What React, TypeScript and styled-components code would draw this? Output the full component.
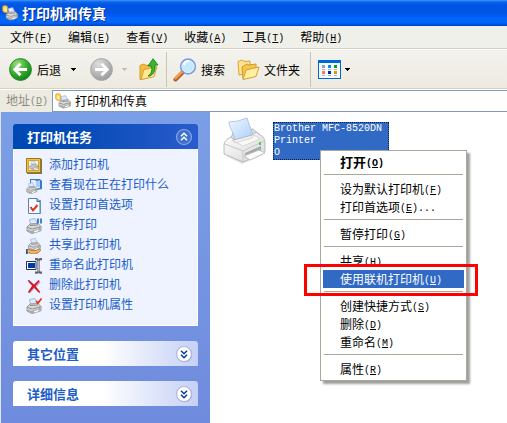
import React from "react";
import styled, { createGlobalStyle, css } from "styled-components";

const Global = createGlobalStyle`
  * { box-sizing: border-box; }
  html, body, #root { height: 100%; }
  body {
    margin: 0;
    overflow: hidden;
    background: #fff;
    color: #000;
    font: 12px/18px "Noto Sans CJK SC", sans-serif;
  }
  button, input { font: inherit; color: inherit; }
  button { border: 0; padding: 0; background: none; text-align: left; white-space: nowrap; }
  svg { display: block; flex: none; }
`;

const Window = styled.div`
  display: flex;
  flex-direction: column;
  min-height: 100%;
`;

const TitleBar = styled.header`
  display: flex;
  align-items: center;
  gap: 4px;
  height: 26px;
  padding-left: 2px;
  background: linear-gradient(#3d95ff 0, #0a62ee 2px, #0054e3 5px, #0055e5 13px, #0066ff 19px, #0062f8 23px, #0040c4 26px);
`;

const Title = styled.h1`
  margin: 0;
  color: #fff;
  font-size: 14px;
  line-height: 24px;
  font-weight: 700;
  text-shadow: 1px 1px 0 #0a2f8c;
`;

const MenuBar = styled.nav`
  display: flex;
  gap: 16px;
  height: 23px;
  padding: 0 10px;
  background: #f0f0eb;
  border-bottom: 1px solid #d8d2bd;
`;

const MenuButton = styled.button`
  line-height: 20px;
`;

const Mono = styled.span<{ $bold?: boolean }>`
  font-family: "Liberation Mono", monospace;
  font-size: 10px;
  line-height: 12px;
  vertical-align: 1px;
  font-weight: ${(p) => (p.$bold ? 700 : 400)};
  u { text-underline-offset: 1px; }
`;

const ToolBar = styled.div`
  display: flex;
  align-items: center;
  height: 40px;
  padding: 1px 0 0 9px;
  background: linear-gradient(#f3f2ee, #edebe0);
  border-top: 1px solid #fff;
  border-bottom: 1px solid #d8d2bd;
`;

const ToolButton = styled.button<{ $gap?: number; $after?: number }>`
  display: flex;
  align-items: center;
  flex: none;
  gap: ${(p) => p.$gap ?? 4}px;
  margin-right: ${(p) => p.$after ?? 0}px;
`;

const Divider = styled.span<{ $after: number }>`
  flex: none;
  width: 1px;
  height: 35px;
  margin-right: ${(p) => p.$after}px;
  background: #cbc6af;
`;

const AddressBar = styled.div`
  display: flex;
  height: 23px;
  border-top: 1px solid #fff;
  background: #edebe1;
`;

const AddressLabel = styled.label`
  width: 52px;
  padding-left: 6px;
  color: #8c8b82;
  line-height: 20px;
`;

const AddressBox = styled.div`
  display: flex;
  flex: 1;
  align-items: center;
  gap: 4px;
  min-width: 0;
  padding-left: 2px;
  border: solid #7f9db9;
  border-width: 1px 0 1px 1px;
  background: #fff;
`;

const AddressInput = styled.input`
  flex: 1;
  min-width: 0;
  height: 18px;
  padding: 0;
  border: 0;
  outline: 0;
  background: transparent;
`;

const Content = styled.div`
  display: flex;
  flex: 1;
`;

const Sidebar = styled.aside`
  display: flex;
  flex: none;
  flex-direction: column;
  gap: 15px;
  width: 210px;
  padding: 12px 12px 17px;
  border-left: 1px solid #dfe5f5;
  background: linear-gradient(#7b9fe6, #6f8bdd);
`;

const Panel = styled.section``;

const PanelHeader = styled.button<{ $open?: boolean }>`
  display: flex;
  align-items: center;
  justify-content: space-between;
  width: 100%;
  height: 25px;
  padding: 0 5px 0 14px;
  border-radius: 3px 3px 0 0;
  font-size: 13px;
  font-weight: 700;
  ${(p) =>
    p.$open
      ? css`
          color: #fff;
          background: linear-gradient(90deg, #0049b4 25%, #2a5bcc);
        `
      : css`
          color: #215dc6;
          background: linear-gradient(90deg, #fff 48%, #c5d1f5);
        `}
`;

const TaskList = styled.ul`
  margin: 0;
  padding: 6px 12px 10px;
  list-style: none;
  background: #eff3ff;
  border: 1px solid #fff;
  border-top: 0;
`;

const TaskLink = styled.a`
  display: flex;
  gap: 7px;
  height: 20px;
  color: #215dc6;
  text-decoration: none;
  svg { margin-top: 3px; }
`;

const Files = styled.main`
  position: relative;
  flex: 1;
  min-width: 0;
  padding: 4px 0 0 12px;
`;

const PrinterItem = styled.button`
  display: flex;
  gap: 6px;
`;

const PrinterName = styled.span`
  width: 116px;
  height: 38px;
  margin-top: 6px;
  border: 1px dotted #0a1c48;
  color: #fff;
  background: #316ac5;
  font-family: "Liberation Mono", monospace;
  font-size: 10px;
  line-height: 12px;
  white-space: normal;
`;

const PopupMenu = styled.div`
  position: absolute;
  top: 38px;
  left: 110px;
  width: 147px;
  padding: 2px;
  border: 1px solid #aca899;
  background: #fff;
  box-shadow: 3px 3px 2px #a0a0a0;
`;

const PopupItem = styled.button<{ $bold?: boolean; $active?: boolean }>`
  display: block;
  width: 100%;
  height: 18px;
  padding-left: 17px;
  line-height: 16px;
  ${(p) => p.$bold && css`font-size: 13px; font-weight: 700;`}
  ${(p) => p.$active && css`color: #fff; background: #316ac5;`}
`;

const PopupLine = styled.hr`
  height: 1px;
  margin: 3px 1px 5px;
  border: 0;
  background: #aca899;
`;

const Highlight = styled.div`
  position: absolute;
  top: 152px;
  left: 94px;
  width: 174px;
  height: 32px;
  border: 3px solid #f00;
  pointer-events: none;
`;

function Key({ k, bold, tail = "" }: { k: string; bold?: boolean; tail?: string }) {
  return <Mono $bold={bold}>(<u>{k}</u>){tail}</Mono>;
}

function PrinterShape() {
  return (
    <>
      <path d="M4.5 7 3.5 1.5 9 .5 12 6.5z" fill="#dbeaff" stroke="#8aa6cc" strokeWidth=".7" />
      <path d="M1 9 4 6l8-.5 3 3v4L6 15.5 1 13z" fill="#dadada" stroke="#808080" strokeWidth=".8" />
      <path d="m1.5 9.5 5 1.5 8-2.2M4 7.5l8-.5" fill="none" stroke="#777" strokeWidth=".8" />
      <path d="M2 11.5 6 13l8-2.5v1.8L6 15l-4-2z" fill="#a8a8a8" />
      <path d="m7 13.2 5-1.6 2.5 1L9 15z" fill="#fff" stroke="#888" strokeWidth=".5" />
      <path d="M13 10h1" stroke="#3cae35" />
    </>
  );
}

function PrintersFolderIcon({ size }: { size: number }) {
  return (
    <svg width={size} height={size} viewBox="0 0 16 16">
      <path d="M.7 2Q.7.7 2 .7h2.5l1 1.3v6L2 7.2.7 6z" fill="#ffd45c" stroke="#d69a22" strokeWidth=".7" />
      <path d="M2.5 3h1.8v3H2.5z" fill="#fff6bd" />
      <g transform="translate(3.2 2.2) scale(.84)"><PrinterShape /></g>
    </svg>
  );
}

type TaskKind = "add" | "queue" | "prefs" | "pause" | "share" | "rename" | "remove" | "props";

function TaskIcon({ kind }: { kind: TaskKind }) {
  return (
    <svg width="16" height="16" viewBox="0 0 16 16">
      {kind === "add" && (
        <>
          <path d="M1 1h15v15H1z" fill="#77735f" />
          <path d="M.5.5h14v14H.5z" fill="#edc54c" stroke="#a57813" />
          <path d="M2.5 2.5h10v10h-10z" fill="#fff9d8" stroke="#c9a23e" />
          <g transform="translate(3.2 2.8) scale(.58)"><PrinterShape /></g>
        </>
      )}
      {kind === "queue" && (
        <>
          <path d="M4 1h10l2 2v8l-5 1-7-3z" fill="#3979cf" />
          <path d="M5 2h4l1 1 4-.5V10l-5 1-4-2z" fill="#deedff" />
          <path d="M10 4h4M10 6h4M10 8h4" stroke="#82a9da" />
          <g transform="translate(0 4.5) scale(.72)"><PrinterShape /></g>
        </>
      )}
      {kind === "prefs" && (
        <>
          <path d="M3 2h12v14H3z" fill="#8e9bac" />
          <path d="M2.5.5H11l3 3v12H2.5z" fill="#f8fbff" stroke="#5882b5" />
          <path d="M11 .5v3h3" fill="#8db9e7" stroke="#3b6eaa" />
          <path d="m4.5 9 2.5 3.3L11.5 7" fill="none" stroke="#e03518" strokeWidth="2" />
        </>
      )}
      {(kind === "pause" || kind === "props") && <PrinterShape />}
      {kind === "pause" && <path d="M12 .5v5M15 .5v5" stroke="#286fc2" strokeWidth="1.7" />}
      {kind === "props" && <path d="m10 3 2 2.2L15.5.5" fill="none" stroke="#eb3216" strokeWidth="1.8" />}
      {kind === "share" && (
        <>
          <g transform="translate(1.7 0) scale(.84)"><PrinterShape /></g>
          <path d="M0 11.5h3l3 1h4l3-1.5 2 1-3 3-4 1-5-1H0z" fill="#f3b367" stroke="#aa681e" strokeWidth=".7" />
          <path d="M0 11h1.7v5H0z" fill="#3a568a" />
        </>
      )}
      {kind === "rename" && (
        <>
          <path d="M.5 3.5H10v8H.5z" fill="#fff" stroke="#25324b" />
          <path d="M2 5h7v5H2z" fill="#0038ad" />
          <path d="M9 1.2h2.2L12.5 2.5 14 1.2h2M9 14.7h2.2l1.3-1.2 1.5 1.2h2M12.5 2.5v11" fill="none" stroke="#5f6670" strokeWidth="2.2" />
          <path d="M12.5 2.5v11" stroke="#c6ccd5" strokeWidth=".8" />
        </>
      )}
      {kind === "remove" && (
        <>
          <path d="m3 4 11 11M14 4 3 15" stroke="#b7a9bb" strokeWidth="1.5" />
          <path d="m1.5 2.5 4.7 5L2 14l1 1 5-5.5 5 5.3 1-1L9.5 8l4.3-5-1.2-1L8 6.5 3 2z" fill="#d91525" />
        </>
      )}
    </svg>
  );
}

function RoundArrow({ back }: { back?: boolean }) {
  const id = back ? "navBack" : "navForward";
  return (
    <svg width="23" height="23" viewBox="0 0 23 23">
      <defs>
        <radialGradient id={id} cx=".35" cy=".25" r=".8">
          <stop stopColor={back ? "#9ce078" : "#dedede"} />
          <stop offset=".55" stopColor={back ? "#3dab31" : "#b9b9b9"} />
          <stop offset="1" stopColor={back ? "#118017" : "#989898"} />
        </radialGradient>
      </defs>
      <circle cx="11.5" cy="11.5" r="10.9" fill={`url(#${id})`} stroke={back ? "#248d27" : "#aaa"} />
      <path
        d={back ? "M18 11.5H6M11.5 5.7l-5.8 5.8 5.8 5.8" : "M5 11.5h12M11.5 5.7l5.8 5.8-5.8 5.8"}
        fill="none" stroke="#fff" strokeWidth="2.8"
      />
    </svg>
  );
}

function Caret({ dim }: { dim?: boolean }) {
  return (
    <svg width="5" height="3" viewBox="0 0 5 3" shapeRendering="crispEdges">
      <path d="M0 0h5v1H4v1H3v1H2V2H1V1H0z" fill={dim ? "#c2c0b6" : "#000"} />
    </svg>
  );
}

function UpIcon() {
  return (
    <svg width="20" height="23" viewBox="0 0 20 23">
      <path d="M1 7.5 5 6l2 1.5 5-1V19L2 21.5H1z" fill="#f2bd42" stroke="#d49b25" />
      <path d="m2 21.5 3-10 13-2.8-3 10z" fill="#ffe995" stroke="#d7a32e" />
      <path d="M9 18q5-3 3.5-10H9l5-7.3L19 7h-3q1 8-5 11z" fill="#37b72e" stroke="#167e1c" strokeWidth=".8" />
    </svg>
  );
}

function SearchIcon() {
  return (
    <svg width="24" height="24" viewBox="0 0 24 24">
      <path d="m9.5 14.5-7 7" stroke="#b65c20" strokeWidth="4" strokeLinecap="round" />
      <path d="m9 14-6.5 6.5" stroke="#f8a552" strokeWidth="2" strokeLinecap="round" />
      <circle cx="15" cy="8.5" r="7.3" fill="#c5e9ff" stroke="#809fdc" strokeWidth="1.8" />
      <circle cx="15" cy="8.5" r="6" fill="none" stroke="#e5f4ff" />
      <path d="M11 7q1-4 5-4" fill="none" stroke="#fff" strokeWidth="2" />
    </svg>
  );
}

function FoldersIcon() {
  return (
    <svg width="23" height="22" viewBox="0 0 23 22">
      <path d="M1 2.5 5 1l2 1.5 6-.5v12L2 16z" fill="#ffe491" stroke="#d9a338" />
      <path d="M5 8 10 5l2 1 7-1v12L6 20z" fill="#f3c64f" stroke="#d29a28" />
      <path d="M6 20.5 9 11l13-3-3 9.5z" fill="#ffef9f" stroke="#d7a130" />
    </svg>
  );
}

function ViewsIcon() {
  const colors = ["#9c99ca", "#078aee", "#09a414", "#ff7751", "#00319e", "#cca000"];
  return (
    <svg width="23" height="19" viewBox="0 0 23 19" shapeRendering="crispEdges">
      <path d="M.5.5h22v18H.5z" fill="#f8fbff" stroke="#0067d7" />
      <path d="M0 0h23v3H0z" fill="#0067d7" />
      {colors.map((c, i) => {
        const x = 4 + (i % 3) * 6;
        const y = 5 + Math.floor(i / 3) * 6;
        return (
          <g key={c}>
            <path d={`M${x} ${y}h3v3h-3z`} fill={c} />
            <path d={`M${x} ${y + 4}h3v1h-3z`} fill="#adb2b9" />
          </g>
        );
      })}
    </svg>
  );
}

function Chevron({ up }: { up?: boolean }) {
  return (
    <svg width="18" height="18" viewBox="0 0 18 18">
      {!up && <circle cx="9.7" cy="9.7" r="7.6" fill="#8c9bc8" opacity=".6" />}
      <circle cx="9" cy="9" r="7.5" fill={up ? "#3f70cf" : "#fff"} stroke={up ? "#84a5e5" : "#b0b8d5"} strokeWidth="1.2" />
      <path
        d={up ? "m6 8.3 3-3 3 3M6 12.3l3-3 3 3" : "m6 5.7 3 3 3-3M6 9.7l3 3 3-3"}
        fill="none" stroke={up ? "#fff" : "#073b9f"} strokeWidth="1.5"
      />
    </svg>
  );
}

function LargePrinter() {
  return (
    <svg width="45" height="49" viewBox="0 0 45 49">
      <defs>
        <linearGradient id="sheet" x2="1" y2="1">
          <stop stopColor="#f2f9ff" /><stop offset="1" stopColor="#a9cdfa" />
        </linearGradient>
        <linearGradient id="shell" x2="1" y2="1">
          <stop stopColor="#fff" /><stop offset="1" stopColor="#d6d6d6" />
        </linearGradient>
      </defs>
      <path d="m4 40 16 8 21-9v-3L18 42z" fill="#e2e2e2" />
      <path d="M9 22 11 17l20-4 8 7-19 8z" fill="#dedede" stroke="#b8b8b8" />
      <path d="M13 24C11 15 7 11 7 6q9 0 18-4 2 6 6 17z" fill="url(#sheet)" stroke="#9cbbe3" strokeWidth=".8" />
      <path d="M2 29q0-5 7-8l3 3 18-5 4-3 7 5q2 2 2 6v9L21 46 2 38z" fill="url(#shell)" stroke="#b4b4b4" strokeWidth=".9" />
      <path d="m3 28 18 7 21-10M21 35v10" fill="none" stroke="#c6c6c6" />
      <path d="m10 24 11 6 17-7-6-4-2 3-17 5z" fill="#f9f9f9" stroke="#cbcbcb" strokeWidth=".7" />
      <path d="m23 37 16-7v5l-16 7z" fill="#a4a8ac" />
      <path d="m22 40 15-6 6 3-15 7z" fill="#fbfbfb" stroke="#b8b8b8" strokeWidth=".8" />
      <path d="M38 26v3" stroke="#52cc42" strokeWidth="2" />
    </svg>
  );
}

const menus = [["文件", "F"], ["编辑", "E"], ["查看", "V"], ["收藏", "A"], ["工具", "T"], ["帮助", "H"]];

const tasks: [TaskKind, string][] = [
  ["add", "添加打印机"],
  ["queue", "查看现在正在打印什么"],
  ["prefs", "设置打印首选项"],
  ["pause", "暂停打印"],
  ["share", "共享此打印机"],
  ["rename", "重命名此打印机"],
  ["remove", "删除此打印机"],
  ["props", "设置打印机属性"],
];

type Command = { text: string; k: string; tail?: string; bold?: boolean; active?: boolean };

const commands: Command[][] = [
  [{ text: "打开", k: "O", bold: true }],
  [{ text: "设为默认打印机", k: "F" }, { text: "打印首选项", k: "E", tail: "..." }],
  [{ text: "暂停打印", k: "G" }],
  [{ text: "共享", k: "H" }, { text: "使用联机打印机", k: "U", active: true }],
  [{ text: "创建快捷方式", k: "S" }, { text: "删除", k: "D" }, { text: "重命名", k: "M" }],
  [{ text: "属性", k: "R" }],
];

export default function App() {
  return (
    <>
      <Global />
      <Window>
        <TitleBar>
          <PrintersFolderIcon size={16} />
          <Title>打印机和传真</Title>
        </TitleBar>
        <MenuBar>
          {menus.map(([text, k]) => (
            <MenuButton key={k}>{text}<Key k={k} /></MenuButton>
          ))}
        </MenuBar>
        <ToolBar>
          <ToolButton $gap={5} $after={10}><RoundArrow back />后退</ToolButton>
          <ToolButton $after={14} aria-label="后退列表"><Caret /></ToolButton>
          <ToolButton $after={9} aria-label="前进"><RoundArrow /></ToolButton>
          <ToolButton $after={12} aria-label="前进列表"><Caret dim /></ToolButton>
          <ToolButton $after={7} aria-label="向上"><UpIcon /></ToolButton>
          <Divider $after={6} />
          <ToolButton $after={12}><SearchIcon />搜索</ToolButton>
          <ToolButton $after={10}><FoldersIcon />文件夹</ToolButton>
          <Divider $after={7} />
          <ToolButton aria-label="查看方式"><ViewsIcon /><Caret /></ToolButton>
        </ToolBar>
        <AddressBar>
          <AddressLabel htmlFor="address">地址<Key k="D" /></AddressLabel>
          <AddressBox>
            <PrintersFolderIcon size={16} />
            <AddressInput id="address" defaultValue="打印机和传真" />
          </AddressBox>
        </AddressBar>
        <Content>
          <Sidebar>
            <Panel>
              <PanelHeader $open aria-expanded>打印机任务<Chevron up /></PanelHeader>
              <TaskList>
                {tasks.map(([kind, text]) => (
                  <li key={kind}><TaskLink href="#"><TaskIcon kind={kind} />{text}</TaskLink></li>
                ))}
              </TaskList>
            </Panel>
            <Panel><PanelHeader aria-expanded={false}>其它位置<Chevron /></PanelHeader></Panel>
            <Panel><PanelHeader aria-expanded={false}>详细信息<Chevron /></PanelHeader></Panel>
          </Sidebar>
          <Files>
            <PrinterItem>
              <LargePrinter />
              <PrinterName>Brother MFC-8520DN<br />Printer<br />O</PrinterName>
            </PrinterItem>
            <PopupMenu role="menu">
              {commands.map((group, i) => (
                <React.Fragment key={i}>
                  {i > 0 && <PopupLine />}
                  {group.map((c) => (
                    <PopupItem key={c.k} role="menuitem" $bold={c.bold} $active={c.active}>
                      {c.text}<Key k={c.k} bold={c.bold} tail={c.tail} />
                    </PopupItem>
                  ))}
                </React.Fragment>
              ))}
            </PopupMenu>
            <Highlight />
          </Files>
        </Content>
      </Window>
    </>
  );
}
